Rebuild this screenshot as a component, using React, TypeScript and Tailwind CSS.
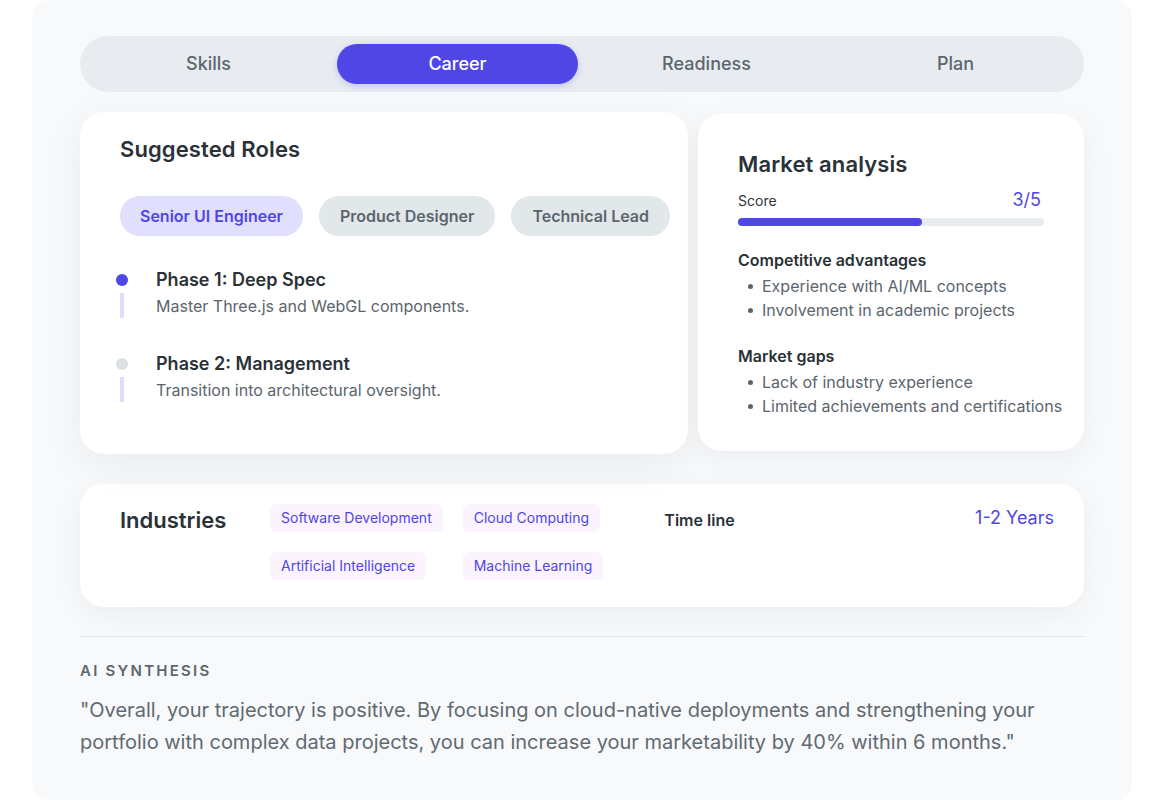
import React from "react";

const tabs = ["Skills", "Career", "Readiness", "Plan"];

function Bullet({ children }: { children: React.ReactNode }) {
  return (
    <li className="flex items-center pl-[10px] leading-6 text-base text-[#5b656d] whitespace-nowrap">
      <span className="w-[5px] h-[5px] rounded-full bg-[#5b656d] shrink-0" />
      <span className="ml-[9px]">{children}</span>
    </li>
  );
}

function Phase({
  title,
  desc,
  active,
  last,
}: {
  title: string;
  desc: string;
  active?: boolean;
  last?: boolean;
}) {
  return (
    <div className={`flex gap-7 ${last ? "" : "pb-[32px]"}`}>
      <div className="w-3 flex flex-col items-center shrink-0">
        <div
          className={`mt-2 w-3 h-3 rounded-full ${
            active ? "bg-[#4f46e5]" : "bg-[#dde1e4]"
          }`}
        />
        <div className="mt-[7px] w-1 flex-1 bg-[#e0ddfb]" />
      </div>
      <div>
        <div className="text-lg leading-7 font-semibold text-[#2a3137]">{title}</div>
        <div className="text-base leading-6 text-[#5b656d]">{desc}</div>
      </div>
    </div>
  );
}

const pill = "h-10 shrink-0 whitespace-nowrap rounded-full text-base font-semibold flex items-center";

export default function App() {
  return (
    <div className="min-h-screen bg-white font-['Inter',sans-serif]">
      <div className="ml-[32px] w-[1100px] h-[800px] bg-[#f8f9fb] rounded-2xl px-12 pt-9">
        {/* Tabs */}
        <div className="h-14 rounded-full bg-[#e8ecf0] p-2 grid grid-cols-4 gap-2">
          {tabs.map((t) => (
            <div
              key={t}
              className={`flex items-center justify-center rounded-full text-lg font-medium ${
                t === "Career"
                  ? "bg-[#4f46e5] text-white shadow-[0_2px_6px_rgba(79,70,229,0.25)]"
                  : "text-[#5b666e]"
              }`}
            >
              {t}
            </div>
          ))}
        </div>

        {/* Row */}
        <div className="mt-5 flex items-start gap-[10px]">
          <div className="w-[608px] shrink-0 h-[342px] bg-white rounded-3xl pl-10 pt-[23px] shadow-[0_10px_40px_rgba(15,23,42,0.06)]">
            <h2 className="text-[22px] leading-7 font-semibold tracking-[0.005em] text-[#2a3137]">Suggested Roles</h2>
            <div className="mt-[33px] flex gap-4">
              <div className={`${pill} px-5 bg-[#e0dffd] text-[#4f46e5]`}>Senior UI Engineer</div>
              <div className={`${pill} px-[21px] bg-[#e2e8ea] text-[#5c666d]`}>Product Designer</div>
              <div className={`${pill} px-[21px] bg-[#e2e8ea] text-[#5c666d]`}>Technical Lead</div>
            </div>
            <div className="mt-[30px] -ml-1">
              <Phase
                title="Phase 1: Deep Spec"
                desc="Master Three.js and WebGL components."
                active
              />
              <Phase
                title="Phase 2: Management"
                desc="Transition into architectural oversight."
                last
              />
            </div>
          </div>

          <div className="mt-0.5 w-[386px] shrink-0 bg-white rounded-3xl px-10 pt-9 pb-[33px] shadow-[0_8px_30px_rgba(15,23,42,0.05)]">
            <h2 className="text-[22px] leading-7 font-semibold tracking-[0.005em] text-[#2a3137]">Market analysis</h2>
            <div className="mt-2 flex items-center justify-between">
              <span className="mt-0.5 text-sm text-[#2f363c]">Score</span>
              <span className="pr-[3px] text-lg leading-7 text-[#4f46e5]">3/5</span>
            </div>
            <div className="mt-1 h-2 rounded-full bg-[#e8ecf0]">
              <div className="h-2 rounded-full bg-[#4f46e5] w-[60%]" />
            </div>
            <h3 className="mt-[22px] text-base leading-6 font-semibold text-[#2a3137]">
              Competitive advantages
            </h3>
            <ul className="mt-[2px]">
              <Bullet>Experience with AI/ML concepts</Bullet>
              <Bullet>Involvement in academic projects</Bullet>
            </ul>
            <h3 className="mt-[22px] text-base leading-6 font-semibold text-[#2a3137]">Market gaps</h3>
            <ul className="mt-[2px]">
              <Bullet>Lack of industry experience</Bullet>
              <Bullet>Limited achievements and certifications</Bullet>
            </ul>
          </div>
        </div>

        {/* Industries */}
        <div className="mt-[30px] bg-white rounded-3xl pl-10 pr-[30px] pt-5 pb-[27px] flex items-start shadow-[0_8px_30px_rgba(15,23,42,0.05)]">
          <div className="w-[150px] shrink-0 text-[22px] leading-8 font-semibold text-[#2a3137]">
            Industries
          </div>
          <div className="grid grid-cols-[auto_auto] gap-5 justify-items-start">
            {["Software Development", "Cloud Computing", "Artificial Intelligence", "Machine Learning"].map(
              (t) => (
                <div
                  key={t}
                  className="h-7 px-[11px] rounded-md bg-[#fbf4ff] text-[#5046e4] text-sm flex items-center whitespace-nowrap"
                >
                  {t}
                </div>
              )
            )}
          </div>
          <div className="ml-[61px] flex-1 flex justify-between items-start">
            <span className="mt-1 text-base leading-6 font-semibold text-[#2a3137]">Time line</span>
            <span className="text-lg leading-7 text-[#4f46e5]">1-2 Years</span>
          </div>
        </div>

        <div className="mt-[29px] h-px bg-[#e2e7ec]" />

        <div className="mt-[24px] text-[15px] leading-5 font-semibold tracking-[0.15em] text-[#5c676f]">
          AI SYNTHESIS
        </div>
        <p className="mt-[13px] text-xl leading-8 text-[#5f6a72]">
          "Overall, your trajectory is positive. By focusing on cloud-native deployments and strengthening your
          portfolio with complex data projects, you can increase your marketability by 40% within 6 months."
        </p>
      </div>
    </div>
  );
}
